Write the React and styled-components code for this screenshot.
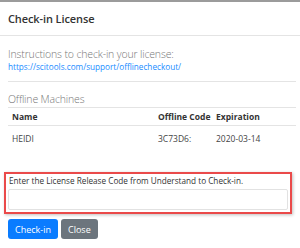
import React from 'react';
import styled, { createGlobalStyle } from 'styled-components';

const GlobalStyle = createGlobalStyle`
  html, body {
    margin: 0;
    padding: 0;
    background: #fff;
  }
  body {
    font-family: "Open Sans", "Noto Sans", sans-serif;
    color: #212529;
  }
`;

const Modal = styled.div`
  width: 300px;
  height: 248px;
  box-sizing: border-box;
  border-top: 2px solid #9b9b9b;
  overflow: hidden;
  background: #fff;
`;

const Header = styled.div`
  height: 33px;
  display: flex;
  align-items: center;
  padding: 0 8px;
  border-bottom: 1px solid #e4e4e4;
`;

const Title = styled.h5`
  margin: 0;
  font-size: 11px;
  font-weight: 600;
  color: #333;
  letter-spacing: -0.1px;
`;

const Body = styled.div`
  padding: 11px 4px 0 8px;
`;

const Lead = styled.div`
  font-size: 10.5px;
  font-weight: 300;
  color: #777;
  line-height: 14px;
  letter-spacing: -0.15px;
`;

const Link = styled.a`
  display: block;
  font-size: 8.2px;
  color: #1a8cff;
  text-decoration: none;
  line-height: 12px;
  padding-bottom: 8px;
  border-bottom: 1px solid #e4e4e4;
`;

const Section = styled.div`
  font-size: 10.5px;
  font-weight: 300;
  color: #777;
  line-height: 14px;
  margin-top: 10px;
  letter-spacing: -0.15px;
`;

const Table = styled.table`
  width: 100%;
  border-collapse: collapse;
  margin-top: 1px;
  font-size: 8.5px;

  & th {
    text-align: left;
    font-weight: 700;
    color: #333;
    height: 17px;
    padding: 0 0 0 4px;
    border-top: 1px solid #e4e4e4;
    border-bottom: 1px solid #e4e4e4;
  }

  & td {
    text-align: left;
    color: #444;
    height: 24px;
    padding: 0 0 0 4px;
  }
`;

const Col = styled.col`
  width: ${(p) => p.$w}px;
`;

const Highlight = styled.div`
  margin: 22px 0 0 -4px;
  width: 288px;
  box-sizing: border-box;
  border: 2px solid #ea4a4a;
  box-shadow: 1px 1px 3px rgba(0, 0, 0, 0.25);
  padding: 1px 2px 1px 2px;
`;

const Prompt = styled.div`
  font-size: 8.2px;
  color: #333;
  line-height: 12px;
  padding-left: 1px;
`;

const Input = styled.input`
  display: block;
  width: 100%;
  box-sizing: border-box;
  height: 21px;
  margin: 2px 0 1px 0;
  border: 1px solid #e2e2e2;
  border-radius: 2px;
  outline: none;
`;

const Actions = styled.div`
  display: flex;
  gap: 3px;
  margin-top: 5px;
`;

const Button = styled.button`
  height: 20px;
  padding: 0 7px;
  border: none;
  border-radius: 3px;
  color: #fff;
  font-family: inherit;
  font-size: 9px;
  background: ${(p) => (p.$variant === 'primary' ? '#0a7cff' : '#6c757d')};
`;

export default function App() {
  return (
    <>
      <GlobalStyle />
      <Modal>
        <Header>
          <Title>Check-in License</Title>
        </Header>
        <Body>
          <Lead>Instructions to check-in your license:</Lead>
          <Link href="#">https://scitools.com/support/offlinecheckout/</Link>
          <Section>Offline Machines</Section>
          <Table>
            <colgroup>
              <Col $w={146} />
              <Col $w={58} />
              <Col />
            </colgroup>
            <thead>
              <tr>
                <th>Name</th>
                <th>Offline Code</th>
                <th>Expiration</th>
              </tr>
            </thead>
            <tbody>
              <tr>
                <td>HEIDI</td>
                <td>3C73D6:</td>
                <td>2020-03-14</td>
              </tr>
            </tbody>
          </Table>
          <Highlight>
            <Prompt>Enter the License Release Code from Understand to Check-in.</Prompt>
            <Input />
          </Highlight>
          <Actions>
            <Button $variant="primary">Check-in</Button>
            <Button>Close</Button>
          </Actions>
        </Body>
      </Modal>
    </>
  );
}
